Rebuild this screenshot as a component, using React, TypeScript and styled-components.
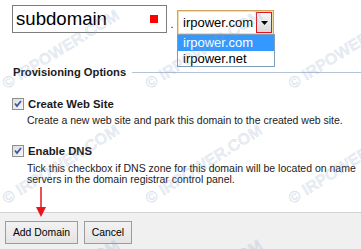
import React from "react";
import styled, { createGlobalStyle } from "styled-components";

const Global = createGlobalStyle`
  html, body { margin: 0; padding: 0; background: #fff; }
  body { font-family: "Liberation Sans", Arial, sans-serif; }
`;

const Page = styled.div`
  position: relative;
  width: 361px;
  height: 249px;
  background: #fff;
  overflow: hidden;
  display: flex;
  flex-direction: column;
  color: #000;
`;

const DomainRow = styled.div`
  position: relative;
  display: flex;
  align-items: flex-start;
  padding: 5px 0 0 12px;
`;

const NameBox = styled.div`
  box-sizing: border-box;
  width: 155px;
  height: 28px;
  border: 1px solid #7d7d7d;
  background: #fff;
  display: flex;
  align-items: center;
  justify-content: space-between;
  padding: 0 8px 0 3px;
  font-size: 18.6px;
  line-height: 1;
`;

const RedMark = styled.span`
  width: 8px;
  height: 8px;
  background: #ff0000;
`;

const Dot = styled.span`
  width: 10px;
  padding-top: 14px;
  font-size: 11px;
  text-align: center;
  line-height: 1;
`;

const SelectBox = styled.div`
  box-sizing: border-box;
  margin-top: 5px;
  width: 97px;
  height: 25px;
  border: 1px solid #cfa75a;
  box-shadow: inset 0 0 0 1px #f3dca8;
  background: #fff;
  display: flex;
  align-items: center;
  justify-content: space-between;
  padding: 0 1px 0 5px;
  font-size: 13px;
`;

const DropButton = styled.span`
  box-sizing: border-box;
  width: 16px;
  height: 21px;
  border: 1px solid #e3141e;
  background: linear-gradient(#f7f7f7, #d9d9d9);
  display: flex;
  align-items: center;
  justify-content: center;
`;

const DropList = styled.div`
  position: absolute;
  left: 177px;
  top: 34px;
  box-sizing: border-box;
  width: 98px;
  border: 1px solid #7f9db9;
  background: #fff;
  font-size: 13px;
  z-index: 2;
`;

const DropItem = styled.div<{ $active?: boolean }>`
  height: 15.5px;
  line-height: 15.5px;
  padding-left: 5px;
  background: ${(p) => (p.$active ? "#3399ff" : "#fff")};
  color: ${(p) => (p.$active ? "#fff" : "#000")};
`;

const Legend = styled.div`
  display: flex;
  align-items: center;
  margin-top: 30px;
  padding-left: 13px;
  height: 14px;
`;

const LegendText = styled.span`
  font-size: 11.2px;
  font-weight: bold;
  color: #1a1a1a;
  white-space: nowrap;
`;

const LegendLine = styled.span`
  flex: 1;
  height: 1px;
  margin-left: 6px;
  background: #b4c3d6;
`;

const Option = styled.div<{ $top: number }>`
  margin-top: ${(p) => p.$top}px;
  padding-left: 12px;
`;

const CheckRow = styled.div`
  display: flex;
  align-items: center;
  height: 13px;
  gap: 4px;
`;

const Label = styled.span`
  font-size: 11.3px;
  font-weight: bold;
  color: #1a1a1a;
`;

const Desc = styled.div<{ $top: number }>`
  margin-top: ${(p) => p.$top}px;
  padding-left: 15px;
  font-size: 10.5px;
  line-height: 11.5px;
  color: #1a1a1a;
  width: 334px;
`;

const BottomBar = styled.div`
  margin-top: auto;
  height: 37px;
  box-sizing: border-box;
  border-top: 1px solid #d4d4d4;
  background: #f0f0f0;
  display: flex;
  align-items: flex-start;
  gap: 6px;
  padding: 8px 0 0 5px;
`;

const Button = styled.button<{ $w: number }>`
  box-sizing: border-box;
  width: ${(p) => p.$w}px;
  height: 23px;
  border: 1px solid #9c9c9c;
  background: linear-gradient(#f2f2f2, #e4e4e4);
  font-family: "Liberation Sans", Arial, sans-serif;
  font-size: 10.4px;
  color: #000;
  padding: 0;
  margin: 0;
`;

const Watermarks = styled.div`
  position: absolute;
  inset: 0;
  pointer-events: none;
  z-index: 3;
`;

const Mark = styled.span`
  position: absolute;
  transform-origin: 0 100%;
  transform: rotate(-32deg);
  font-size: 16px;
  font-weight: bold;
  color: rgba(140, 165, 200, 0.2);
  white-space: nowrap;
  line-height: 16px;
  -webkit-text-stroke: 0.4px rgba(120, 145, 185, 0.22);
`;

const Arrow = styled.svg`
  position: absolute;
  left: 34px;
  top: 187px;
  z-index: 4;
`;

function CheckBox() {
  return (
    <svg width="12" height="12" viewBox="0 0 12 12">
      <defs>
        <linearGradient id="cbg" x1="0" y1="0" x2="1" y2="1">
          <stop offset="0" stopColor="#dcdcdc" />
          <stop offset="1" stopColor="#f8f8f8" />
        </linearGradient>
      </defs>
      <rect x="0.5" y="0.5" width="11" height="11" fill="url(#cbg)" stroke="#8e8f8f" />
      <path d="M3 5.5 L5 8 L9 3" fill="none" stroke="#3d56a6" strokeWidth="1.8" />
    </svg>
  );
}

const marks: Array<[number, number]> = [];
for (let r = 0; r < 3; r++) {
  for (let c = 0; c < 3; c++) {
    marks.push([8 + c * 143, 76 + r * 115]);
  }
}

export default function App() {
  return (
    <>
      <Global />
      <Page>
        <DomainRow>
          <NameBox>
            <span>subdomain</span>
            <RedMark />
          </NameBox>
          <Dot>.</Dot>
          <SelectBox>
            <span>irpower.com</span>
            <DropButton>
              <svg width="7" height="4" viewBox="0 0 7 4">
                <path d="M0 0 H7 L3.5 4 Z" fill="#000" />
              </svg>
            </DropButton>
          </SelectBox>
        </DomainRow>
        <DropList>
          <DropItem $active>irpower.com</DropItem>
          <DropItem>irpower.net</DropItem>
        </DropList>

        <Legend>
          <LegendText>Provisioning Options</LegendText>
          <LegendLine />
        </Legend>

        <Option $top={18}>
          <CheckRow>
            <CheckBox />
            <Label>Create Web Site</Label>
          </CheckRow>
          <Desc $top={5}>Create a new web site and park this domain to the created web site.</Desc>
        </Option>

        <Option $top={18}>
          <CheckRow>
            <CheckBox />
            <Label>Enable DNS</Label>
          </CheckRow>
          <Desc $top={5}>
            Tick this checkbox if DNS zone for this domain will be located on name servers in the domain registrar control panel.
          </Desc>
        </Option>

        <BottomBar>
          <Button $w={73}>Add Domain</Button>
          <Button $w={48}>Cancel</Button>
        </BottomBar>

        <Arrow width="14" height="31" viewBox="0 0 14 31">
          <line x1="7" y1="0" x2="7" y2="22" stroke="#e8141c" strokeWidth="1.5" />
          <path d="M2 20 L12 20 L7 30 Z" fill="#e8141c" />
        </Arrow>

        <Watermarks>
          {marks.map(([x, y], i) => (
            <Mark key={i} style={{ left: x, top: y }}>
              © IRPOWER.COM
            </Mark>
          ))}
        </Watermarks>
      </Page>
    </>
  );
}
